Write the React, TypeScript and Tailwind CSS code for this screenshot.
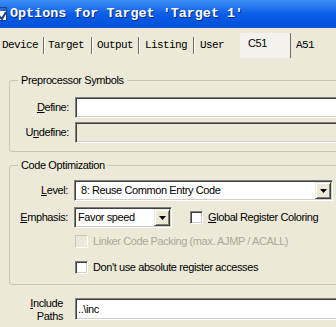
import React from 'react';

const sunken =
  'border border-t-[#808080] border-l-[#808080] border-b-white border-r-white shadow-[inset_1px_1px_0_#404040,inset_-1px_-1px_0_#d4d0c8]';

function ArrowButton() {
  return (
    <div className="ml-auto mr-[1px] w-[16px] h-[17px] flex items-center justify-center bg-[#ece9d8] border border-t-[#ece9d8] border-l-[#ece9d8] border-b-[#404040] border-r-[#404040] shadow-[inset_1px_1px_0_#fff,inset_-1px_-1px_0_#808080]">
      <svg width="7" height="4" viewBox="0 0 7 4">
        <path d="M0 0h7L3.5 4z" fill="#000" />
      </svg>
    </div>
  );
}

function CheckBox({ disabled }: { disabled?: boolean }) {
  return disabled ? (
    <div className="w-[13px] h-[13px] shrink-0 bg-[#ece9d8] border border-t-[#c8c6b8] border-l-[#c8c6b8] border-b-white border-r-white" />
  ) : (
    <div className={'w-[13px] h-[13px] shrink-0 bg-white ' + sunken} />
  );
}

function TitleBar() {
  return (
    <div className="h-[28px] flex items-center overflow-hidden bg-linear-to-b from-[#3d8ff7] via-[#0a5de6] to-[#0250d8]">
      <svg width="16" height="16" viewBox="0 0 16 16" className="-ml-[9px] shrink-0">
        <rect x="0.5" y="1.5" width="15" height="13" fill="#fff" stroke="#1c3f8a" />
        <rect x="1" y="2" width="14" height="3" fill="#3466c6" />
        <path d="M8 10l3 3 4-7" stroke="#1c3f8a" strokeWidth="2" fill="none" />
      </svg>
      <span className="ml-[3px] font-['Liberation_Mono',monospace] font-bold text-[13.4px] tracking-normal text-white whitespace-pre [text-shadow:1px_1px_0_#0b2a8a]">
        Options for Target 'Target 1'
      </span>
    </div>
  );
}

function Tabs() {
  const off = 'mt-[9px] h-[17px] leading-[17px] whitespace-pre';
  const sep = ' border-r border-r-[#6f6d62] shadow-[1px_0_0_#fff]';
  return (
    <div className="h-[30px] flex font-['Liberation_Mono',monospace] text-[11px] tracking-[-0.6px]">
      <div className={'w-[44px] pl-[2px] ' + off + sep}>Device</div>
      <div className={'w-[48px] pl-[4px] ' + off + sep}>Target</div>
      <div className={'w-[47px] pl-[5px] ' + off + sep}>Output</div>
      <div className={'w-[55px] pl-[6px] ' + off + sep}>Listing</div>
      <div className={'w-[46px] pl-[6px] ' + off}>User</div>
      <div className="w-[51px] mt-[5px] pl-[8px] pt-[4px] bg-[#f3f2ec] border-r border-r-[#6f6d62] font-['Liberation_Sans',Arial,sans-serif] tracking-[-0.4px] leading-[13px]">
        C51
      </div>
      <div className={'pl-[5px] ' + off}>A51</div>
    </div>
  );
}

export default function App() {
  return (
    <div className="w-[336px] h-[327px] overflow-hidden bg-[#ece9d8] font-['Liberation_Sans',Arial,sans-serif] text-[11px] tracking-[-0.4px] text-black">
      <TitleBar />
      <Tabs />

      <div className="w-[400px]">
        {/* Preprocessor Symbols */}
        <fieldset className="mt-[15px] ml-[9px] w-[360px] border border-[#c9c6b6] rounded-[3px] pt-[10px] pb-[8px] pr-[20px]">
          <legend className="ml-[8px] px-[3px] leading-[14px]">Preprocessor Symbols</legend>
          <div className="flex items-center">
            <div className="w-[59px] text-right">
              <u>D</u>efine:
            </div>
            <div className={'ml-[6px] flex-1 h-[21px] bg-white ' + sunken} />
          </div>
          <div className="mt-[4px] flex items-center">
            <div className="w-[59px] text-right">
              U<u>n</u>define:
            </div>
            <div className={'ml-[6px] flex-1 h-[21px] bg-[#ece9d8] ' + sunken} />
          </div>
        </fieldset>

        {/* Code Optimization */}
        <fieldset className="mt-[6px] ml-[9px] w-[360px] border border-[#c9c6b6] rounded-[3px] pt-[8px] pb-[10px]">
          <legend className="ml-[8px] px-[3px] leading-[14px]">Code Optimization</legend>
          <div className="flex items-center">
            <div className="w-[58px] text-right">
              <u>L</u>evel:
            </div>
            <div className={'ml-[6px] w-[259px] h-[21px] flex items-center bg-white ' + sunken}>
              <span className="pl-[6px]">8: Reuse Common Entry Code</span>
              <ArrowButton />
            </div>
          </div>
          <div className="mt-[6px] flex items-center">
            <div className="w-[58px] text-right">
              <u>E</u>mphasis:
            </div>
            <div className={'ml-[6px] w-[98px] h-[21px] flex items-center bg-white ' + sunken}>
              <span className="pl-[3px]">Favor speed</span>
              <ArrowButton />
            </div>
            <div className="ml-[18px] flex items-center">
              <CheckBox />
              <span className="ml-[5px]">
                <u>G</u>lobal Register Coloring
              </span>
            </div>
          </div>
          <div className="mt-[7px] ml-[65px] h-[13px] leading-[13px] flex items-center text-[#aca899]">
            <CheckBox disabled />
            <span className="ml-[5px]">Linker Code Packing (max. AJMP / ACALL)</span>
          </div>
          <div className="mt-[13px] ml-[65px] h-[13px] leading-[13px] flex items-center">
            <CheckBox />
            <span className="ml-[5px]">Don't use absolute register accesses</span>
          </div>
        </fieldset>

        {/* Include Paths */}
        <div className="mt-[13px] flex items-start">
          <div className="w-[63px] -mt-[1px] text-right leading-[13px]">
            <div>
              <u>I</u>nclude
            </div>
            <div>Paths</div>
          </div>
          <div className={'ml-[12px] flex-1 h-[22px] flex items-center bg-white ' + sunken}>
            <span className="pl-[2px]">..\inc</span>
          </div>
        </div>
      </div>
    </div>
  );
}
